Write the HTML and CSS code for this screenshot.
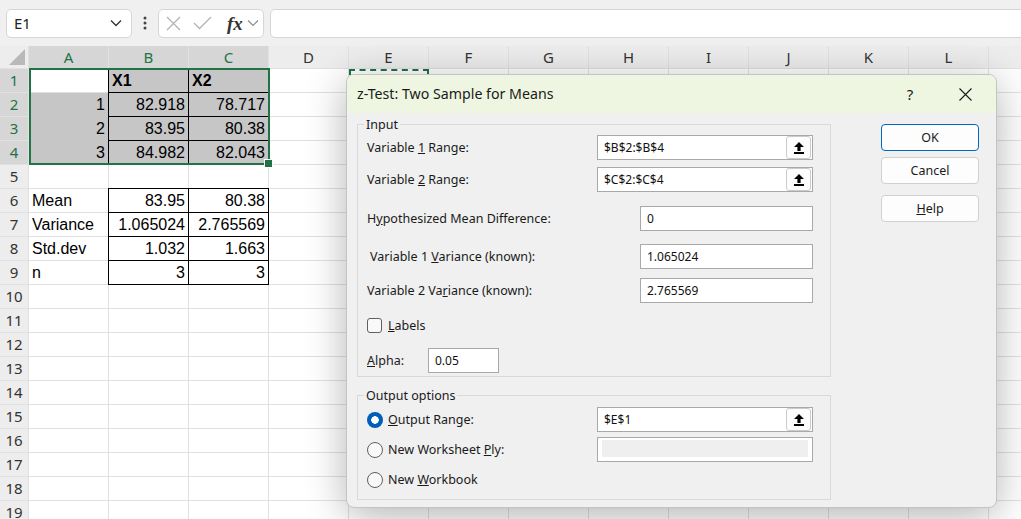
FILE: index.html
```html
<!DOCTYPE html>
<html lang="en">
<head>
    <meta charset="UTF-8">
    <title>z-Test: Two Sample for Means</title>
    <link rel="stylesheet" href="styles.css">
</head>
<body>
<div class="toolbar">
    <div class="namebox">
        <span>E1</span>
        <svg width="12" height="8" viewBox="0 0 12 8"><polyline points="1,1.5 6,6.5 11,1.5" fill="none" stroke="#333" stroke-width="1.3"/></svg>
    </div>
    <svg class="dots" width="4" height="14" viewBox="0 0 4 14"><circle cx="2" cy="2" r="1.5"/><circle cx="2" cy="7" r="1.5"/><circle cx="2" cy="12" r="1.5"/></svg>
    <div class="fxbox">
        <svg class="x-icon" width="15" height="15" viewBox="0 0 15 15"><path d="M1 1 L14 14 M14 1 L1 14" stroke="#b3b3b3" stroke-width="1.3"/></svg>
        <svg class="check-icon" width="19" height="14" viewBox="0 0 19 14"><polyline points="1,7 6.5,12.5 18,1" fill="none" stroke="#b3b3b3" stroke-width="1.3"/></svg>
        <span class="fx">fx</span>
        <svg class="fx-chev" width="12" height="8" viewBox="0 0 12 8"><polyline points="1,1.5 6,6.5 11,1.5" fill="none" stroke="#888" stroke-width="1.1"/></svg>
    </div>
    <div class="formula"></div>
</div>

<div class="sheet">
    <div class="corner"></div><div class="ch on">A</div><div class="ch on">B</div><div class="ch on">C</div><div class="ch">D</div><div class="ch">E</div><div class="ch">F</div><div class="ch">G</div><div class="ch">H</div><div class="ch">I</div><div class="ch">J</div><div class="ch">K</div><div class="ch">L</div><div class="ch"></div>

    <div class="rh on">1</div><div></div><div class="fill box b">X1</div><div class="fill box b">X2</div><div></div><div class="ants"></div><div></div><div></div><div></div><div></div><div></div><div></div><div></div><div></div>
    <div class="rh on">2</div><div class="fill col num">1</div><div class="fill box num">82.918</div><div class="fill box num">78.717</div><div></div><div></div><div></div><div></div><div></div><div></div><div></div><div></div><div></div><div></div>
    <div class="rh on">3</div><div class="fill col num">2</div><div class="fill box num">83.95</div><div class="fill box num">80.38</div><div></div><div></div><div></div><div></div><div></div><div></div><div></div><div></div><div></div><div></div>
    <div class="rh on">4</div><div class="fill num">3</div><div class="fill box num">84.982</div><div class="fill box num">82.043</div><div></div><div></div><div></div><div></div><div></div><div></div><div></div><div></div><div></div><div></div>
    <div class="rh">5</div><div></div><div></div><div></div><div></div><div></div><div></div><div></div><div></div><div></div><div></div><div></div><div></div><div></div>
    <div class="rh">6</div><div>Mean</div><div class="box num">83.95</div><div class="box num">80.38</div><div></div><div></div><div></div><div></div><div></div><div></div><div></div><div></div><div></div><div></div>
    <div class="rh">7</div><div>Variance</div><div class="box num">1.065024</div><div class="box num">2.765569</div><div></div><div></div><div></div><div></div><div></div><div></div><div></div><div></div><div></div><div></div>
    <div class="rh">8</div><div>Std.dev</div><div class="box num">1.032</div><div class="box num">1.663</div><div></div><div></div><div></div><div></div><div></div><div></div><div></div><div></div><div></div><div></div>
    <div class="rh">9</div><div>n</div><div class="box num">3</div><div class="box num">3</div><div></div><div></div><div></div><div></div><div></div><div></div><div></div><div></div><div></div><div></div>
    <div class="rh">10</div><div></div><div></div><div></div><div></div><div></div><div></div><div></div><div></div><div></div><div></div><div></div><div></div><div></div>
    <div class="rh">11</div><div></div><div></div><div></div><div></div><div></div><div></div><div></div><div></div><div></div><div></div><div></div><div></div><div></div>
    <div class="rh">12</div><div></div><div></div><div></div><div></div><div></div><div></div><div></div><div></div><div></div><div></div><div></div><div></div><div></div>
    <div class="rh">13</div><div></div><div></div><div></div><div></div><div></div><div></div><div></div><div></div><div></div><div></div><div></div><div></div><div></div>
    <div class="rh">14</div><div></div><div></div><div></div><div></div><div></div><div></div><div></div><div></div><div></div><div></div><div></div><div></div><div></div>
    <div class="rh">15</div><div></div><div></div><div></div><div></div><div></div><div></div><div></div><div></div><div></div><div></div><div></div><div></div><div></div>
    <div class="rh">16</div><div></div><div></div><div></div><div></div><div></div><div></div><div></div><div></div><div></div><div></div><div></div><div></div><div></div>
    <div class="rh">17</div><div></div><div></div><div></div><div></div><div></div><div></div><div></div><div></div><div></div><div></div><div></div><div></div><div></div>
    <div class="rh">18</div><div></div><div></div><div></div><div></div><div></div><div></div><div></div><div></div><div></div><div></div><div></div><div></div><div></div>
    <div class="rh">19</div><div></div><div></div><div></div><div></div><div></div><div></div><div></div><div></div><div></div><div></div><div></div><div></div><div></div>

    <span class="selbox"></span>
</div>

<div class="dialog">
    <div class="titlebar">
        <span class="title">z-Test: Two Sample for Means</span>
        <span class="tb-help">?</span>
        <span class="tb-close">
            <svg width="13" height="13" viewBox="0 0 13 13"><path d="M0.5 0.5 L12.5 12.5 M12.5 0.5 L0.5 12.5" stroke="#1a1a1a" stroke-width="1.1"/></svg>
        </span>
    </div>

    <div class="dbody">
        <div class="groups">
            <fieldset class="input-group">
                <legend>Input</legend>
                <div class="row r1">
                    <label>Variable <u>1</u> Range:</label>
                    <div class="field wide">$B$2:$B$4
                        <span class="refbtn"><svg width="10" height="12" viewBox="0 0 10 12"><path d="M5 0 L10 5 H6.6 V9 H3.4 V5 H0 Z"/><rect y="10" width="10" height="2"/></svg></span>
                    </div>
                </div>
                <div class="row r2">
                    <label>Variable <u>2</u> Range:</label>
                    <div class="field wide">$C$2:$C$4
                        <span class="refbtn"><svg width="10" height="12" viewBox="0 0 10 12"><path d="M5 0 L10 5 H6.6 V9 H3.4 V5 H0 Z"/><rect y="10" width="10" height="2"/></svg></span>
                    </div>
                </div>
                <div class="row r3">
                    <label>H<u>y</u>pothesized Mean Difference:</label>
                    <div class="field mid">0</div>
                </div>
                <div class="row r4">
                    <label class="indent">Variable 1 <u>V</u>ariance (known):</label>
                    <div class="field mid">1.065024</div>
                </div>
                <div class="row r5">
                    <label>Variable 2 Va<u>r</u>iance (known):</label>
                    <div class="field mid">2.765569</div>
                </div>
                <div class="row r6">
                    <span class="checkbox"></span>
                    <label><u>L</u>abels</label>
                </div>
                <div class="row r7">
                    <label class="alpha"><u>A</u>lpha:</label>
                    <div class="field small">0.05</div>
                </div>
            </fieldset>

            <fieldset class="output-group">
                <legend>Output options</legend>
                <div class="row">
                    <span class="radio checked"></span>
                    <label><u>O</u>utput Range:</label>
                    <div class="field wide">$E$1
                        <span class="refbtn"><svg width="10" height="12" viewBox="0 0 10 12"><path d="M5 0 L10 5 H6.6 V9 H3.4 V5 H0 Z"/><rect y="10" width="10" height="2"/></svg></span>
                    </div>
                </div>
                <div class="row o2">
                    <span class="radio"></span>
                    <label>New Worksheet <u>P</u>ly:</label>
                    <div class="field wide disabled"><span class="inner"></span></div>
                </div>
                <div class="row o3">
                    <span class="radio"></span>
                    <label>New <u>W</u>orkbook</label>
                </div>
            </fieldset>
        </div>

        <div class="buttons">
            <div class="btn default">OK</div>
            <div class="btn">Cancel</div>
            <div class="btn help"><span><u>H</u>elp</span></div>
        </div>
    </div>
</div>
</body>
</html>
```

FILE: styles.css
```css
* {
    box-sizing: border-box;
}

body {
    margin: 0;
    width: 1021px;
    height: 519px;
    overflow: hidden;
    position: relative;
    background: #fff;
    font-family: "Liberation Sans", Arial, sans-serif;
}

/* Formula bar */
.toolbar {
    height: 46px;
    background: #f0f0f0;
    display: flex;
    align-items: center;
    padding-left: 6px;
}

.namebox {
    width: 126px;
    height: 29px;
    background: #fff;
    border: 1px solid #d6d6d6;
    border-radius: 5px;
    display: flex;
    align-items: center;
    justify-content: space-between;
    padding: 0 9px 0 7px;
    font-family: "Noto Sans", sans-serif;
    font-size: 15px;
    color: #222;
}

.dots {
    fill: #444;
    margin: 0 11px 0 11px;
}

.fxbox {
    width: 106px;
    height: 29px;
    background: #fff;
    border: 1px solid #d6d6d6;
    border-radius: 5px;
    display: flex;
    align-items: center;
    padding-left: 7px;
}

.check-icon {
    margin-left: 12px;
}

.fx {
    margin-left: 15px;
    font-family: "Liberation Serif", serif;
    font-style: italic;
    font-weight: bold;
    font-size: 19px;
    color: #333;
    line-height: 1;
}

.fx-chev {
    margin-left: 4px;
}

.formula {
    flex: 1;
    height: 29px;
    margin-left: 6px;
    margin-right: -10px;
    background: #fff;
    border: 1px solid #d6d6d6;
    border-radius: 5px;
}

/* Worksheet grid */
.sheet {
    display: grid;
    grid-template-columns: 28px repeat(12, 79px) 1fr;
    grid-template-rows: 22px repeat(19, 23px);
    gap: 1px;
    background: #e1e1e1;
    position: relative;
}

.sheet > div {
    background: #fff;
    font-size: 16px;
    line-height: 23px;
    padding: 0 3px;
    white-space: nowrap;
    overflow: hidden;
    color: #000;
}

.sheet > .corner {
    background: #ededed;
    position: relative;
}

.sheet > .corner::after {
    content: '';
    position: absolute;
    right: 3px;
    bottom: 3px;
    border-left: 16px solid transparent;
    border-bottom: 16px solid #b9b9b9;
}

.sheet > .ch,
.sheet > .rh {
    background: #ededed;
    color: #333;
    font-family: "Noto Sans", sans-serif;
    font-size: 15px;
    text-align: center;
    padding: 0;
}

.sheet > .ch {
    line-height: 22px;
}

.sheet > .ch.on,
.sheet > .rh.on {
    background: #d6d6d6;
    color: #217346;
}

.sheet > .fill {
    background: #c6c6c6;
}

.sheet > .col {
    box-shadow: 0 1px 0 #c6c6c6;
}

.num {
    text-align: right;
}

.b {
    font-weight: bold;
}

.box {
    outline: 1px solid #000;
}

.sheet > .ants {
    position: relative;
    overflow: visible;
}

.ants::after {
    content: '';
    position: absolute;
    top: 0;
    left: 0;
    right: -1px;
    bottom: -1px;
    border: 2px dashed #217346;
}

.selbox {
    position: absolute;
    left: 29px;
    top: 22px;
    width: 241px;
    height: 97px;
    border: 2px solid #217346;
    pointer-events: none;
}

.selbox::after {
    content: '';
    position: absolute;
    right: -5px;
    bottom: -5px;
    width: 7px;
    height: 7px;
    background: #217346;
    border: 1px solid #fff;
}

/* Dialog */
.dialog {
    position: absolute;
    left: 346px;
    top: 74px;
    width: 651px;
    height: 434px;
    background: #f0f0f0;
    border: 1px solid #c4c4c4;
    border-radius: 8px;
    box-shadow: 0 8px 40px rgba(0, 0, 0, 0.3);
    overflow: hidden;
    font-family: "Noto Sans", sans-serif;
    font-size: 12.5px;
    color: #1a1a1a;
}

.titlebar {
    height: 38px;
    background: #eef6e1;
    display: flex;
    align-items: center;
    padding: 0 8px 0 10px;
}

.title {
    flex: 1;
    font-size: 14.2px;
    color: #1a1a1a;
    margin-top: -2px;
}

.tb-help {
    width: 64px;
    text-align: center;
    font-size: 15px;
}

.tb-close {
    width: 46px;
    display: flex;
    justify-content: center;
}

.dbody {
    display: flex;
    padding: 3px 0 0 10px;
}

.groups {
    width: 474px;
}

fieldset {
    margin: 0;
    border: 1px solid #d9d9d9;
    padding: 3px 17px 3px 9px;
}

legend {
    padding: 0 2px;
    margin-left: -3px;
    line-height: 17px;
    font-size: 12.5px;
}

.output-group {
    margin-top: 10px;
    padding-bottom: 7px;
}

.row {
    display: flex;
    align-items: center;
    height: 25px;
}

.row label {
    flex: 1;
}

.r1 { margin-top: -1px; }
.r2 { margin-top: 7px; }
.r3 { margin-top: 14px; }
.r4 { margin-top: 13px; }
.r5 { margin-top: 9px; }
.r6 { margin-top: 10px; }
.r7 { margin-top: 10px; }
.o2 { margin-top: 5px; }
.o3 { margin-top: 5px; }

.row label.indent {
    padding-left: 3px;
}

.row label.alpha {
    flex: none;
    width: 61px;
}

.field {
    height: 25px;
    background: #fff;
    border: 1px solid #a9a9a9;
    display: flex;
    align-items: center;
    justify-content: space-between;
    padding: 0 1px 0 6px;
    color: #111;
    font-size: 12px;
}

.wide { width: 216px; }
.mid { width: 173px; }
.small { width: 71px; }

.field.disabled {
    padding: 2px 4px 4px 4px;
    align-items: stretch;
}

.field .inner {
    flex: 1;
    background: #efefef;
}

.refbtn {
    width: 25px;
    height: 23px;
    background: #fdfdfd;
    border: 1px solid #cbcbcb;
    border-radius: 3px;
    display: flex;
    align-items: center;
    justify-content: center;
}

.checkbox {
    width: 15px;
    height: 15px;
    border: 1px solid #5f5f5f;
    border-radius: 3px;
    background: #f9f9f9;
    margin-right: 6px;
}

.radio {
    width: 16px;
    height: 16px;
    border: 1px solid #5f5f5f;
    border-radius: 50%;
    background: #f9f9f9;
    margin-right: 5px;
}

.radio.checked {
    border: none;
    background: radial-gradient(circle, #fff 0 3.5px, #005fb8 4px);
}

.buttons {
    margin-left: 50px;
    padding-top: 8px;
    display: flex;
    flex-direction: column;
}

.btn {
    width: 98px;
    height: 27px;
    background: #fdfdfd;
    border: 1px solid #d0d0d0;
    border-radius: 4px;
    display: flex;
    align-items: center;
    justify-content: center;
    font-size: 12.5px;
    margin-bottom: 6px;
}

.btn.default {
    border-color: #0067c0;
}

.btn.help {
    margin-top: 5px;
}
```
